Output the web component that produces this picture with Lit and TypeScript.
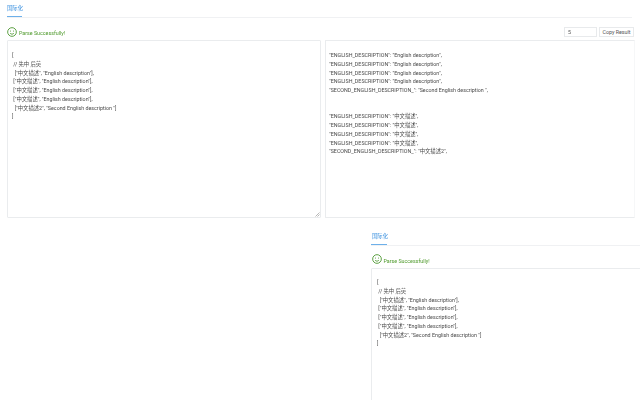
import { LitElement, html, css } from "lit";
import { customElement } from "lit/decorators.js";

const INPUT = `[
 // 先中 后英
  ["中文描述", "English description"],
 ["中文描述", "English description"],
 ["中文描述", "English description"],
 ["中文描述", "English description"],
  ["中文描述2", "Second English description "]
]`;

const OUTPUT = `"ENGLISH_DESCRIPTION": "English description",
"ENGLISH_DESCRIPTION": "English description",
"ENGLISH_DESCRIPTION": "English description",
"ENGLISH_DESCRIPTION": "English description",
"SECOND_ENGLISH_DESCRIPTION_": "Second English description ",


"ENGLISH_DESCRIPTION": "中文描述",
"ENGLISH_DESCRIPTION": "中文描述",
"ENGLISH_DESCRIPTION": "中文描述",
"ENGLISH_DESCRIPTION": "中文描述",
"SECOND_ENGLISH_DESCRIPTION_": "中文描述2",`;

const smile = html`<svg class="smile" viewBox="0 0 12 12" aria-hidden="true">
  <circle cx="6" cy="6" r="5.2" fill="none" stroke="#3f8f20" stroke-width="1"></circle>
  <circle cx="4.1" cy="4.8" r="0.6" fill="#3f8f20"></circle>
  <circle cx="7.9" cy="4.8" r="0.6" fill="#3f8f20"></circle>
  <path d="M3.8 7.2 A2.4 2.4 0 0 0 8.2 7.2" fill="none" stroke="#3f8f20" stroke-width="0.9"></path>
</svg>`;

@customElement("app-root")
export class AppRoot extends LitElement {
  static styles = css`
    :host {
      display: block;
      width: 640px;
      height: 400px;
      overflow: hidden;
      background: #fff;
      font-family: Roboto, "Noto Sans CJK SC", sans-serif;
      font-size: 5.33px;
      color: #666;
    }
    .top,
    .bottom {
      filter: blur(0.25px);
    }
    .top {
      width: 633px;
      height: 227.6px;
      padding-left: 7px;
    }
    .tabs {
      height: 17px;
      border-bottom: 1px solid #f0f1f3;
      width: 625px;
    }
    .tab {
      display: inline-block;
      height: 17px;
      box-sizing: border-box;
      padding-top: 5px;
      width: 15px;
      line-height: 7px;
      color: #3f93e0;
      border-bottom: 1px solid #6db0ea;
      white-space: nowrap;
    }
    .status {
      display: flex;
      align-items: center;
      height: 22px;
      box-sizing: border-box;
      padding-top: 5px;
      width: 627px;
    }
    .smile {
      width: 10px;
      height: 10px;
      margin-right: 2px;
      flex: none;
    }
    .ok {
      color: #4f9a2c;
      flex: 1;
      padding-top: 3px;
    }
    .count {
      width: 33px;
      height: 10px;
      box-sizing: border-box;
      border: 1px solid #e8eaec;
      font: inherit;
      color: #555;
      padding: 0 0 0 3px;
      outline: none;
      margin-right: 2px;
    }
    .copy {
      width: 35px;
      height: 10px;
      box-sizing: border-box;
      border: 1px solid #e8eaec;
      background: #fff;
      font: inherit;
      color: #555;
      padding: 0;
      white-space: nowrap;
    }
    .panes {
      display: flex;
      gap: 4px;
    }
    .box {
      position: relative;
      height: 178px;
      box-sizing: border-box;
      border: 1px solid #eaecee;
      border-radius: 1px;
      white-space: pre;
      line-height: 8.75px;
      color: #4a4a4a;
      overflow: hidden;
    }
    .left {
      width: 314px;
      padding: 10px 0 0 4px;
    }
    .right {
      width: 310px;
      padding: 10px 0 0 3px;
      border-right-color: #f6f7f8;
    }
    .grip {
      position: absolute;
      right: 0;
      bottom: 0;
      width: 5px;
      height: 5px;
    }
    .bottom {
      margin-left: 371px;
      width: 269px;
    }
    .bottom .tabs {
      width: 269px;
    }
    .bottom .tab {
      width: 16px;
      padding-left: 1px;
    }
    .bottom .status {
      width: 269px;
    }
    .bottom .smile {
      margin-left: 0.5px;
    }
    .bottom .box {
      width: 280px;
      height: 140px;
      padding: 9.5px 0 0 5px;
    }
  `;

  render() {
    return html`
      <section class="top">
        <div class="tabs"><span class="tab">国际化</span></div>
        <div class="status">
          ${smile}
          <span class="ok">Parse Successfully!</span>
          <input class="count" .value=${"5"} />
          <button class="copy">Copy Result</button>
        </div>
        <div class="panes">
          <div class="box left">${INPUT}
            <svg class="grip" viewBox="0 0 5 5" aria-hidden="true">
              <path d="M0.5 4.5 L4.5 0.5 M2.5 4.5 L4.5 2.5" stroke="#888" stroke-width="0.6"></path>
            </svg>
          </div>
          <div class="box right">${OUTPUT}</div>
        </div>
      </section>
      <section class="bottom">
        <div class="tabs"><span class="tab">国际化</span></div>
        <div class="status">
          ${smile}
          <span class="ok">Parse Successfully!</span>
        </div>
        <div class="box">${INPUT}</div>
      </section>
    `;
  }
}
